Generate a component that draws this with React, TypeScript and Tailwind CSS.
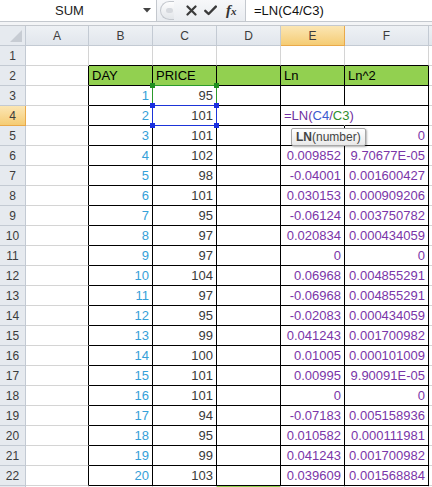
import React from "react";

type Row = [number, number, string, string];

// B, C, E, F values for rows 3..22
const rows: Row[] = [
  [1, 95, "", ""],
  [2, 101, "", ""],
  [3, 101, "", "0"],
  [4, 102, "0.009852", "9.70677E-05"],
  [5, 98, "-0.04001", "0.001600427"],
  [6, 101, "0.030153", "0.000909206"],
  [7, 95, "-0.06124", "0.003750782"],
  [8, 97, "0.020834", "0.000434059"],
  [9, 97, "0", "0"],
  [10, 104, "0.06968", "0.004855291"],
  [11, 97, "-0.06968", "0.004855291"],
  [12, 95, "-0.02083", "0.000434059"],
  [13, 99, "0.041243", "0.001700982"],
  [14, 100, "0.01005", "0.000101009"],
  [15, 101, "0.00995", "9.90091E-05"],
  [16, 101, "0", "0"],
  [17, 94, "-0.07183", "0.005158936"],
  [18, 95, "0.010582", "0.000111981"],
  [19, 99, "0.041243", "0.001700982"],
  [20, 103, "0.039609", "0.001568884"],
];

const COLS = ["A", "B", "C", "D", "E", "F", "G"];
const TABLE_COLS = ["B", "C", "D", "E", "F"];

const Formula = () => (
  <>
    <span className="text-[#7030a0]">=LN(</span>
    <span className="text-[#3b5bd0]">C4</span>
    <span className="text-[#7030a0]">/</span>
    <span className="text-[#2f8f2f]">C3</span>
    <span className="text-[#7030a0]">)</span>
  </>
);

function cellContent(r: number, c: string): React.ReactNode {
  if (r === 2) {
    const head: Record<string, string> = { B: "DAY", C: "PRICE", E: "Ln", F: "Ln^2" };
    return head[c] ? <span className="text-black">{head[c]}</span> : null;
  }
  if (r === 4 && c === "E") return <Formula />;
  if (r < 3 || r > 22) return null;
  const d = rows[r - 3];
  if (c === "B") return <span className="text-[#35a0d8]">{d[0]}</span>;
  if (c === "C") return <span className="text-[#3a3a3a]">{d[1]}</span>;
  if (c === "E") return <span className="text-[#7a35a8]">{d[2]}</span>;
  if (c === "F") return <span className="text-[#7a35a8]">{d[3]}</span>;
  return null;
}

function Cell({ r, c }: { r: number; c: string }) {
  const inTable = r >= 2 && r <= 22 && TABLE_COLS.includes(c);
  const editing = r === 4 && c === "E";
  let border = "border-r border-b border-[#d4d4d4]";
  if (editing) border = "border-r border-b border-r-transparent border-b-black";
  else if (inTable) border = "border-r border-b border-black";
  else if (c === "A" && r >= 2 && r <= 22) border = "border-r border-b border-r-black border-b-[#d4d4d4]";
  else if (r === 1 && TABLE_COLS.includes(c)) border = "border-r border-b border-r-[#d4d4d4] border-b-black";

  const green = (r === 2 && inTable) || (r === 23 && c === "D");
  const left = r === 2 || editing;

  return (
    <div
      className={`h-[20px] ${border} ${green ? "bg-[#92d050]" : "bg-white"} flex items-center px-[3px] text-[13px] leading-[19px] whitespace-nowrap ${
        left ? "justify-start" : "justify-end"
      } ${editing ? "relative z-10 overflow-visible" : ""}`}
    >
      {cellContent(r, c)}
    </div>
  );
}

function ColHeader({ c }: { c: string }) {
  const active = c === "E";
  return (
    <div
      className={`h-[20px] border-r border-b flex items-center justify-center text-[12px] text-[#3c3c3c] ${
        active
          ? "bg-gradient-to-b from-[#fbe6b4] to-[#f5cc73] border-[#e9a94a]"
          : "bg-gradient-to-b from-[#eef1f5] to-[#e1e6ec] border-[#c3cad3]"
      }`}
    >
      {c === "G" ? "" : c}
    </div>
  );
}

function RowHeader({ r }: { r: number }) {
  const active = r === 4;
  return (
    <div
      className={`h-[20px] border-r border-b flex items-center justify-center text-[12px] text-[#3c3c3c] ${
        active
          ? "bg-gradient-to-b from-[#fbe6b4] to-[#f5cc73] border-[#e9a94a]"
          : "bg-[#e6eaef] border-[#c3cad3]"
      }`}
    >
      {r <= 22 ? r : ""}
    </div>
  );
}

const Handle = ({ x, y, color }: { x: number; y: number; color: string }) => (
  <div className={`absolute w-[5px] h-[5px] ${color}`} style={{ left: x - 2, top: y - 2 }} />
);

export default function App() {
  const rowNums = Array.from({ length: 23 }, (_, i) => i + 1);
  return (
    <div className="relative w-[432px] h-[487px] overflow-hidden bg-white font-['Liberation_Sans',Arial,sans-serif]">
      {/* formula bar */}
      <div className="flex h-[22px] border-b border-[#c4c8ce] bg-gradient-to-b from-[#f7f8fa] to-[#e9ecf0]">
        <div className="w-[157px] bg-white border-r border-[#c4c8ce] flex items-center">
          <span className="flex-1 text-center text-[13px] text-[#222] pr-[4px]">SUM</span>
          <svg width="8" height="5" viewBox="0 0 8 5" className="mr-[5px]">
            <path d="M0 0 L8 0 L4 4.5 Z" fill="#444" />
          </svg>
        </div>
        <div className="w-[88px] flex items-center">
          <div className="ml-[3px] w-[14px] h-[19px] rounded-l-full border border-r-0 border-[#c3c7cd] bg-gradient-to-b from-[#fdfdfd] to-[#e3e6ea] flex items-center justify-end pr-[1px]">
            <div className="w-[7px] h-[5px] rounded-full bg-[#d6d9de]" />
          </div>
          <svg width="11" height="11" viewBox="0 0 11 11" className="ml-[12px]">
            <path d="M1.5 1.5 L9.5 9.5 M9.5 1.5 L1.5 9.5" stroke="#3a3a3a" strokeWidth="2.2" strokeLinecap="round" />
          </svg>
          <svg width="13" height="11" viewBox="0 0 13 11" className="ml-[7px]">
            <path d="M1.3 5.8 L4.6 9 L11.8 1.6" stroke="#3a3a3a" strokeWidth="2.4" fill="none" strokeLinejoin="round" strokeLinecap="round" />
          </svg>
          <span className="ml-[9px] font-['Liberation_Serif',serif] italic font-bold text-[15px] leading-none text-[#333]">
            f<span className="text-[11px]">x</span>
          </span>
        </div>
        <div className="flex-1 bg-white border-l border-[#c4c8ce] flex items-center pl-[8px] text-[13px] text-[#111]">
          =LN(C4/C3)
        </div>
      </div>
      <div className="h-[4px] bg-[#f3f4f6] border-b border-[#c4c8ce]" />

      {/* sheet grid */}
      <div className="grid grid-cols-[26px_63px_64px_64px_64px_64px_84px_1fr]">
        <div className="h-[20px] border-r border-b border-[#c3cad3] bg-[#e6eaef] flex items-end justify-end pr-[3px] pb-[3px]">
          <svg width="12" height="12" viewBox="0 0 12 12">
            <path d="M12 0 L12 12 L0 12 Z" fill="#c7ccd3" />
          </svg>
        </div>
        {COLS.map((c) => (
          <ColHeader key={c} c={c} />
        ))}
        {rowNums.map((r) => (
          <React.Fragment key={r}>
            <RowHeader r={r} />
            {COLS.map((c) => (
              <Cell key={c} r={r} c={c} />
            ))}
          </React.Fragment>
        ))}
      </div>

      {/* range reference boxes */}
      <div className="absolute left-[152px] top-[85px] w-[65px] h-[21px] border border-[#2c9a2c]" />
      <div className="absolute left-[152px] top-[105px] w-[65px] h-[21px] border border-[#1d34d6]" />
      <Handle x={152} y={85} color="bg-[#1f8f1f]" />
      <Handle x={216} y={85} color="bg-[#1f8f1f]" />
      <Handle x={152} y={105} color="bg-[#1a2fe0]" />
      <Handle x={216} y={105} color="bg-[#1a2fe0]" />
      <Handle x={152} y={125} color="bg-[#1a2fe0]" />
      <Handle x={216} y={125} color="bg-[#1a2fe0]" />

      {/* function tooltip */}
      <div className="absolute z-20 left-[291px] top-[128px] h-[18px] px-[4px] flex items-center rounded-[2px] border border-[#a7a7a7] bg-gradient-to-b from-[#ffffff] to-[#e9e9e9] shadow-[1px_1px_2px_rgba(0,0,0,0.3)] text-[12px] text-[#444] whitespace-nowrap">
        <span className="font-bold">LN</span>
        <span>(number)</span>
      </div>
    </div>
  );
}
